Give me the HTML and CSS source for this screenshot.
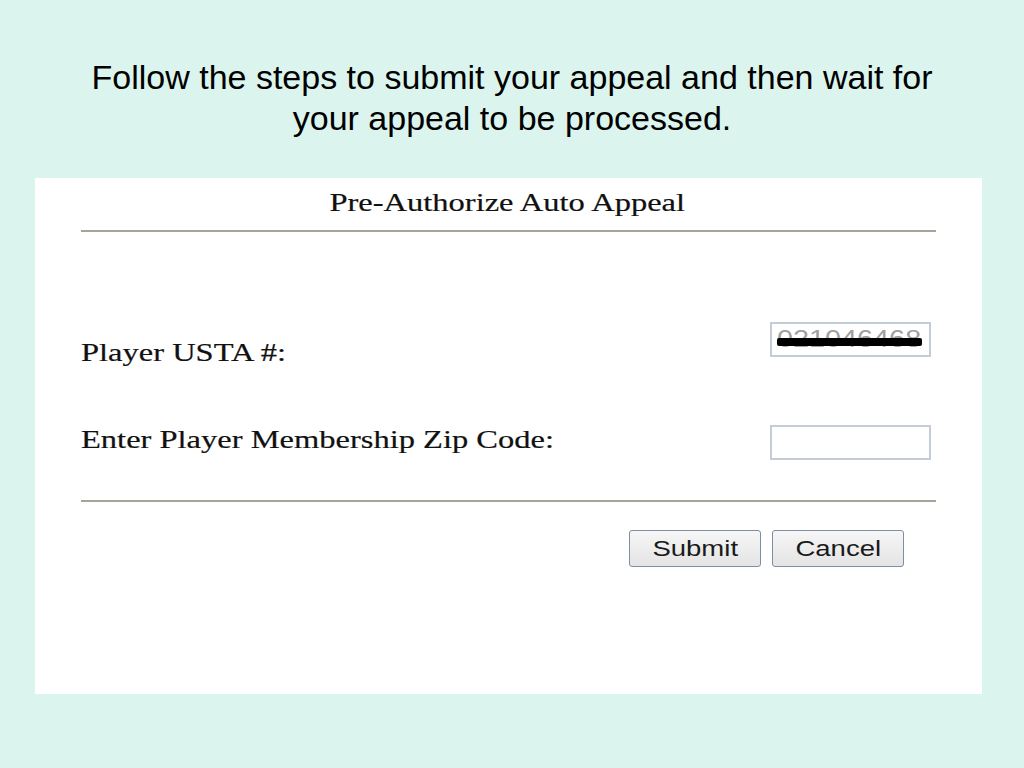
FILE: index.html
```html
<!DOCTYPE html>
<html>
<head>
<meta charset="utf-8">
<link rel="stylesheet" href="styles.css">
</head>
<body>
<div class="slide">
  <h1 class="heading">Follow the steps to submit your appeal and then wait for<br>your appeal to be processed.</h1>
  <div class="panel">
    <div class="panel-title"><span class="wide">Pre-Authorize Auto Appeal</span></div>
    <hr class="rule">
    <div class="form">
      <div class="row row-usta">
        <span class="label wide">Player USTA #:</span>
        <div class="field masked"><span class="value">021046468</span><span class="strike"></span></div>
      </div>
      <div class="row row-zip">
        <span class="label wide">Enter Player Membership Zip Code:</span>
        <div class="field"></div>
      </div>
    </div>
    <hr class="rule rule-bottom">
    <div class="actions">
      <button class="btn"><span class="wide">Submit</span></button>
      <button class="btn"><span class="wide">Cancel</span></button>
    </div>
  </div>
</div>
</body>
</html>
```

FILE: styles.css
```css
html, body {
  margin: 0;
  padding: 0;
}
body {
  width: 1024px;
  height: 768px;
  background: #dbf5ee;
  overflow: hidden;
}
.slide {
  display: flex;
  flex-direction: column;
  align-items: flex-start;
}
.heading {
  margin: 0;
  width: 1024px;
  padding-top: 57px;
  text-align: center;
  font-family: "Liberation Sans", Arial, sans-serif;
  font-weight: normal;
  font-size: 34px;
  line-height: 41px;
  color: #000;
}
.wide {
  display: inline-block;
  transform: scaleX(1.25);
}
.panel {
  margin-top: 39px;
  margin-left: 35px;
  width: 947px;
  height: 516px;
  background: #fff;
  box-sizing: border-box;
  padding: 0 46px;
  display: flex;
  flex-direction: column;
}
.panel-title {
  font-family: "Liberation Serif", "Times New Roman", serif;
  font-size: 26px;
  color: #111;
  text-align: center;
  padding-top: 8px;
  line-height: 34px;
  -webkit-text-stroke: 0.2px #111;
}
.panel-title .wide {
  transform-origin: center;
  transform: translateX(-1px) scaleX(1.25);
}
.rule {
  margin: 0;
  border: 0;
  height: 2px;
  background: #a4a497;
}
.panel-title + .rule {
  margin-top: 10px;
}
.form {
  display: flex;
  flex-direction: column;
  padding-top: 90px;
}
.row {
  display: flex;
  justify-content: space-between;
  align-items: flex-start;
  padding-right: 5px;
}
.label {
  font-family: "Liberation Serif", "Times New Roman", serif;
  font-size: 26px;
  color: #111;
  -webkit-text-stroke: 0.2px #111;
  transform-origin: left center;
}
.row-usta .label {
  margin-top: 16px;
}
.row-zip {
  margin-top: 56px;
}
.row-zip .label {
  margin-top: 1px;
}
.row-zip .field {
  margin-top: 1px;
}
.field {
  position: relative;
  width: 161px;
  height: 35px;
  box-sizing: border-box;
  border: 2px solid #c4ccd8;
  background: #fff;
  overflow: hidden;
}
.value {
  display: block;
  font-family: "Liberation Sans", Arial, sans-serif;
  font-size: 24px;
  color: #a0a0a0;
  line-height: 30px;
  height: 30px;
  margin-left: 5px;
  transform-origin: left center;
  transform: scaleX(1.2);
}
.strike {
  position: absolute;
  left: 5px;
  top: 14px;
  width: 145px;
  height: 8px;
  background: #000;
  border-radius: 2px;
}
.rule-bottom {
  margin-top: 40px;
}
.actions {
  display: flex;
  justify-content: flex-end;
  gap: 11px;
  padding-right: 32px;
  margin-top: 28px;
}
.btn {
  width: 132px;
  height: 37px;
  box-sizing: border-box;
  border: 1px solid #7d8ea6;
  border-radius: 3px;
  background: linear-gradient(#f6f6f6, #e4e4e4);
  font-family: "Liberation Sans", Arial, sans-serif;
  font-size: 22px;
  color: #1a1a1a;
  padding: 0;
}
```
